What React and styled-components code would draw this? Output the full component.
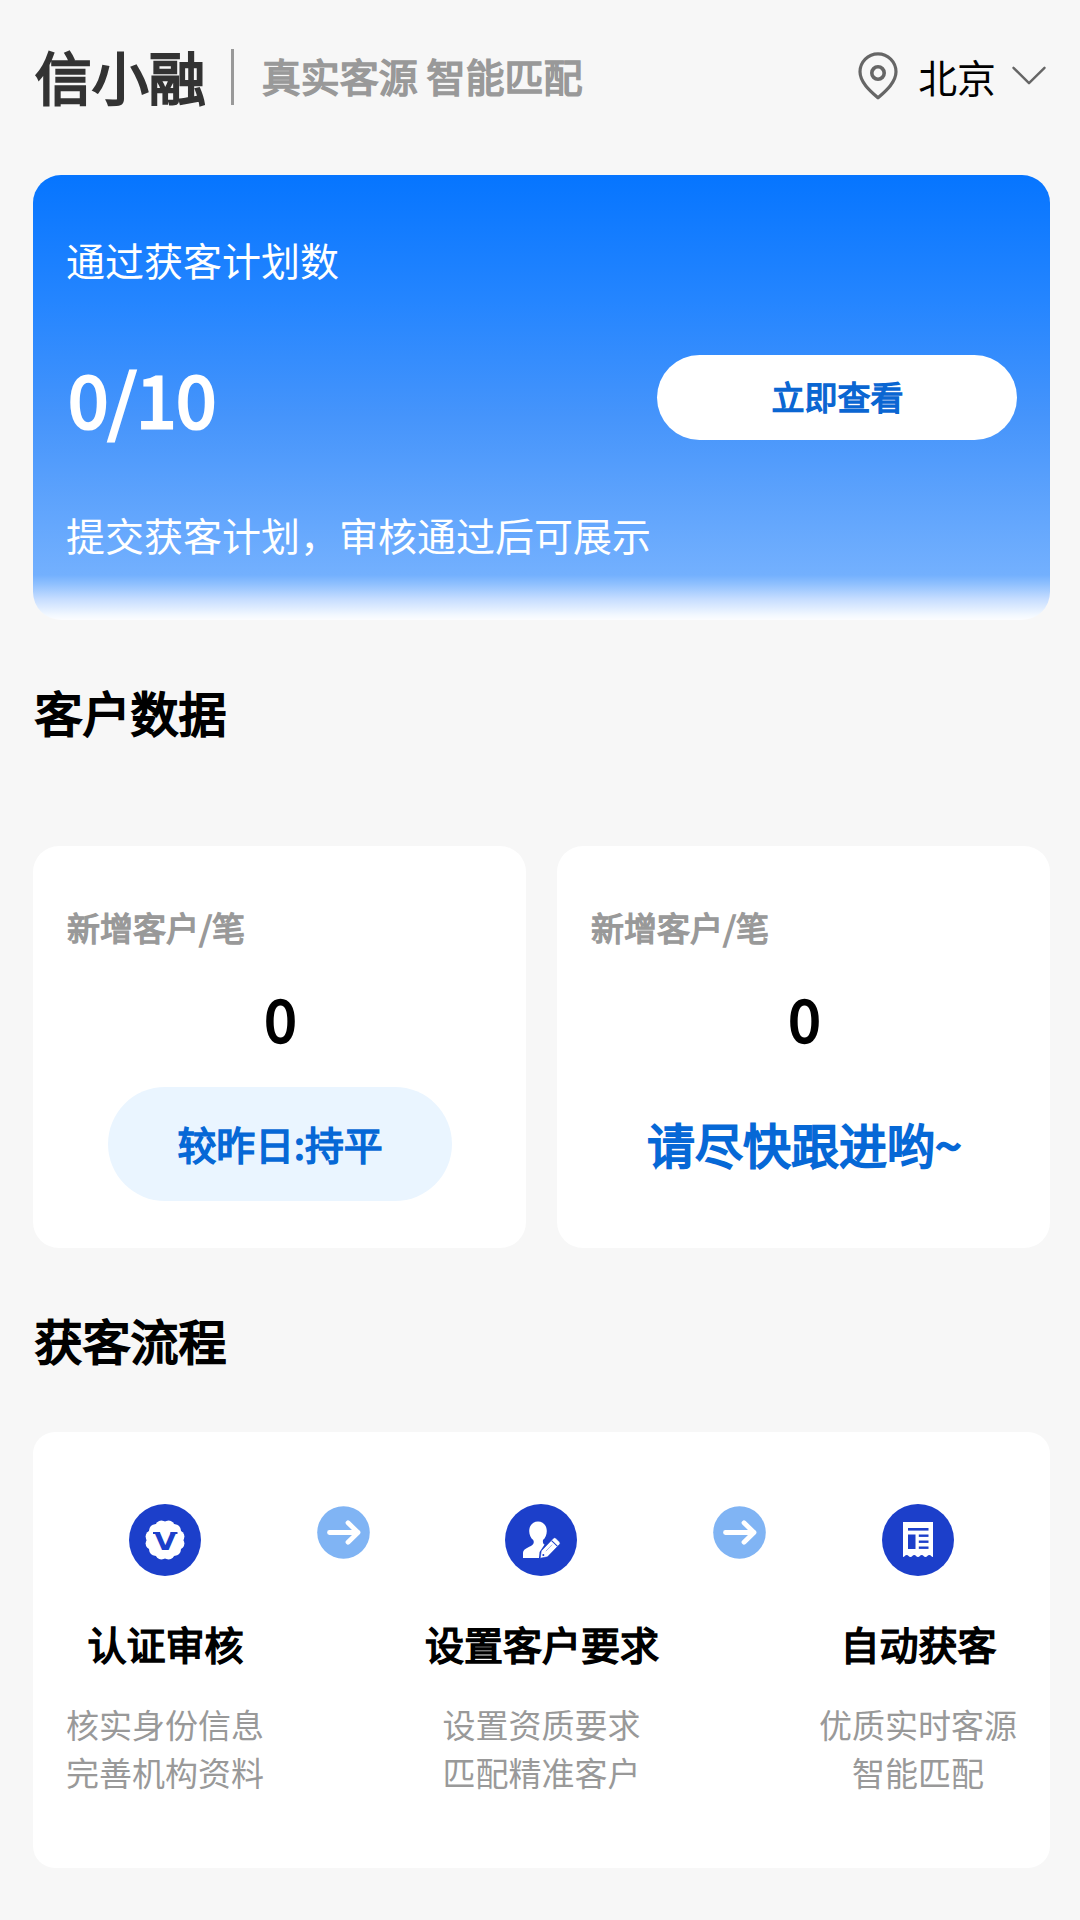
import React from 'react';
import styled, { createGlobalStyle, css } from 'styled-components';

const GlobalStyle = createGlobalStyle`
  * {
    box-sizing: border-box;
  }

  body {
    margin: 0;
    background: #f7f7f7;
    color: #000;
    font-family: 'Noto Sans CJK SC', sans-serif;
  }
`;

// regular cut thickened by an outline, like the system bold on phones
const emboldened = css`
  font-weight: 400;
  -webkit-text-stroke: 0.042em currentColor;
  text-indent: 0.03em;
`;

const Page = styled.div`
  display: flex;
  flex-direction: column;
  width: 1080px;
  height: 1920px;
  padding: 0 30px 0 33px;
  background: #f7f7f7;
`;

const Header = styled.header`
  display: flex;
  align-items: center;
  height: 175px;
  padding-bottom: 22px;
`;

const Brand = styled.h1`
  ${emboldened}
  margin: 0 0 3px;
  font-size: 57px;
  line-height: 84px;
  color: #333;
`;

const Divider = styled.div`
  width: 3px;
  height: 56px;
  margin: 0 27px 0 25px;
  background: #999;
`;

const Slogan = styled.div`
  ${emboldened}
  margin-bottom: 4px;
  font-size: 39px;
  line-height: 56px;
  color: #999;
`;

const Location = styled.div`
  display: flex;
  align-items: center;
  margin-left: auto;
  padding: 0 4px 1px 0;
`;

const City = styled.span`
  margin: 0 16px 0 20px;
  font-size: 38.9px;
  line-height: 56px;
`;

const PlanCard = styled.section`
  display: flex;
  flex-direction: column;
  justify-content: space-between;
  height: 445px;
  padding: 56px 33px 58px;
  border-radius: 28px;
  background: linear-gradient(
    180deg,
    #0675ff 0,
    #2485ff 125px,
    #4594fb 240px,
    #73b0fe 400px,
    #8fc0fe 409px,
    #c6ddff 424px,
    #f2f8ff 440px,
    #fcfdff 445px
  );
  color: #fff;
`;

const PlanText = styled.div`
  font-size: 39px;
  line-height: 56px;
`;

const PlanRow = styled.div`
  display: flex;
  align-items: center;
  justify-content: space-between;
`;

const PlanCount = styled.div`
  ${emboldened}
  font-size: 72px;
  line-height: 104px;
`;

const ViewButton = styled.button`
  ${emboldened}
  width: 360px;
  height: 85px;
  margin-top: 2px;
  padding: 0 0 4px;
  border: 0;
  border-radius: 43px;
  background: #fff;
  color: #0a66d2;
  font-family: inherit;
  font-size: 33px;
  line-height: 48px;
`;

const SectionTitle = styled.h2`
  ${emboldened}
  margin: ${({ $margin }) => $margin};
  font-size: 48px;
  line-height: 70px;
`;

const StatGrid = styled.div`
  display: grid;
  grid-template-columns: 1fr 1fr;
  gap: 31px;
`;

const StatCard = styled.section`
  display: flex;
  flex-direction: column;
  align-items: center;
  height: 402px;
  padding: 57px 33px 0;
  border-radius: 26px;
  background: #fff;
`;

const StatLabel = styled.div`
  ${emboldened}
  align-self: flex-start;
  font-size: 33px;
  line-height: 48px;
  color: #999;
`;

const StatValue = styled.div`
  ${emboldened}
  margin: 25px 0 28px;
  font-size: 57.6px;
  line-height: 83px;
`;

const StatNote = styled.div`
  ${emboldened}
  display: flex;
  align-items: center;
  justify-content: center;
  width: 344px;
  height: 114px;
  padding-bottom: 3px;
  border-radius: 57px;
  background: ${({ $pill }) => ($pill ? '#eaf5ff' : 'transparent')};
  color: #0668d6;
  font-size: ${({ $pill }) => ($pill ? '38.9px' : '48px')};
  white-space: nowrap;
`;

const FlowCard = styled.section`
  display: flex;
  justify-content: space-between;
  height: 436px;
  padding: 72px 33px 0;
  border-radius: 22px;
  background: #fff;
`;

const Step = styled.div`
  display: flex;
  flex-direction: column;
  align-items: center;
`;

const StepTitle = styled.h3`
  ${emboldened}
  margin: 39px 0 29px;
  font-size: 39px;
  line-height: 56px;
`;

const StepText = styled.p`
  margin: 0;
  font-size: 33px;
  line-height: 48px;
  text-align: center;
  color: #999;
`;

const ArrowIcon = styled.svg`
  flex: none;
  margin-top: 2px;
`;

const PinIcon = () => (
  <svg width="40" height="48" viewBox="0 0 40 48" fill="none" stroke="#666" strokeWidth="3.2">
    <path
      d="M20 45.8C14 40.5 2 31 2 19.8a18 18 0 0 1 36 0C38 31 26 40.5 20 45.8Z"
      strokeLinejoin="round"
    />
    <circle cx="20" cy="21" r="6.2" strokeWidth="3.6" />
  </svg>
);

const ChevronIcon = () => (
  <svg width="34" height="20" viewBox="0 0 34 20" fill="none" stroke="#666" strokeWidth="2.4">
    <path d="M1.5 1.8 17 17.2 32.5 1.8" strokeLinecap="round" strokeLinejoin="round" />
  </svg>
);

const Arrow = () => (
  <ArrowIcon width="53" height="53" viewBox="0 0 53 53" fill="none">
    <circle cx="26.5" cy="26.5" r="26.3" fill="#80b4f4" />
    <path
      d="M12.5 26.5H41M31 16.8 41 26.5 31 36.2"
      stroke="#fff"
      strokeWidth="4.8"
      strokeLinecap="round"
      strokeLinejoin="round"
    />
  </ArrowIcon>
);

const petals = Array.from({ length: 12 }, (_, i) => {
  const angle = ((i + 0.5) * Math.PI) / 6;
  return { cx: 36 + 14 * Math.cos(angle), cy: 36 + 14 * Math.sin(angle) };
});

const VerifyIcon = () => (
  <svg width="72" height="72" viewBox="0 0 72 72">
    <circle cx="36" cy="36" r="36" fill="#1c3fca" />
    <g fill="#fff">
      <circle cx="36" cy="36" r="18.4" />
      {petals.map((p) => (
        <circle key={`${p.cx}-${p.cy}`} cx={p.cx} cy={p.cy} r="5.9" />
      ))}
    </g>
    <g fill="#1c3fca">
      <rect x="24" y="28" width="7" height="2" />
      <rect x="41.5" y="28" width="7" height="2" />
      <text
        x="25"
        y="45.5"
        fontFamily="DejaVu Sans"
        fontWeight="700"
        fontSize="24"
        textLength="22.5"
        lengthAdjust="spacingAndGlyphs"
      >
        V
      </text>
    </g>
  </svg>
);

const CustomerIcon = () => (
  <svg width="72" height="72" viewBox="0 0 72 72">
    <circle cx="36" cy="36" r="36" fill="#1c3fca" />
    <path
      d="M33 17.5c5.2 0 8.8 4 8.8 9.4 0 3.8-1.6 7.2-3.8 9.2-.4 2.3.2 3.8 1.6 4.4l-5 7.5-.6 6H18v-5.2c0-4.8 8.6-5.8 10.2-8.8.8-1.4.7-2.6 0-3.9-2.3-2-4-5.4-4-9.2 0-5.4 3.6-9.4 8.8-9.4Z"
      fill="#fff"
    />
    <g transform="translate(35.2 54.2) rotate(-46)">
      <path
        d="M0 0 6-4.3H23.5a1.7 1.7 0 0 1 1.7 1.7V2.6a1.7 1.7 0 0 1-1.7 1.7H6Z"
        fill="#fff"
        stroke="#1c3fca"
        strokeWidth="0.5"
      />
      <path d="M20.5-4V4" stroke="#1c3fca" strokeWidth="1" />
      <path d="M9-.8H18" stroke="#1c3fca" strokeWidth="0.4" />
      <circle cx="4.5" cy="0" r="1" fill="#1c3fca" />
    </g>
  </svg>
);

const ReceiptIcon = () => (
  <svg width="72" height="72" viewBox="0 0 72 72">
    <circle cx="36" cy="36" r="36" fill="#1c3fca" />
    <path
      d="M21 18H51V53c-1.5 0-2-2-3.7-2s-2.2 2-3.8 2-2.2-2-3.8-2-2.1 2-3.7 2-2.2-2-3.8-2-2.1 2-3.7 2-2.2-2-3.8-2-2.2 2-3.7 2Z"
      fill="#fff"
    />
    <g fill="#1c3fca">
      <rect x="26" y="24" width="20.5" height="2.6" />
      <rect x="26" y="30.5" width="7.5" height="14.5" />
      <rect x="36.8" y="30.5" width="9.7" height="2.4" />
      <rect x="36.8" y="36.5" width="9.7" height="2.4" />
      <rect x="36.8" y="42.5" width="9.7" height="2.4" />
    </g>
  </svg>
);

const steps = [
  { title: '认证审核', lines: ['核实身份信息', '完善机构资料'], Icon: VerifyIcon },
  { title: '设置客户要求', lines: ['设置资质要求', '匹配精准客户'], Icon: CustomerIcon },
  { title: '自动获客', lines: ['优质实时客源', '智能匹配'], Icon: ReceiptIcon },
];

const App = () => (
  <React.Fragment>
    <GlobalStyle />
    <Page>
      <Header>
        <Brand>信小融</Brand>
        <Divider />
        <Slogan>真实客源 智能匹配</Slogan>
        <Location>
          <PinIcon />
          <City>北京</City>
          <ChevronIcon />
        </Location>
      </Header>

      <PlanCard>
        <PlanText>通过获客计划数</PlanText>
        <PlanRow>
          <PlanCount>0/10</PlanCount>
          <ViewButton>立即查看</ViewButton>
        </PlanRow>
        <PlanText>提交获客计划，审核通过后可展示</PlanText>
      </PlanCard>

      <SectionTitle $margin="56px 0 100px">客户数据</SectionTitle>
      <StatGrid>
        <StatCard>
          <StatLabel>新增客户/笔</StatLabel>
          <StatValue>0</StatValue>
          <StatNote $pill>较昨日:持平</StatNote>
        </StatCard>
        <StatCard>
          <StatLabel>新增客户/笔</StatLabel>
          <StatValue>0</StatValue>
          <StatNote>请尽快跟进哟~</StatNote>
        </StatCard>
      </StatGrid>

      <SectionTitle $margin="56px 0 58px">获客流程</SectionTitle>
      <FlowCard>
        {steps.map(({ title, lines, Icon }, i) => (
          <React.Fragment key={title}>
            {i > 0 && <Arrow />}
            <Step>
              <Icon />
              <StepTitle>{title}</StepTitle>
              {lines.map((line) => (
                <StepText key={line}>{line}</StepText>
              ))}
            </Step>
          </React.Fragment>
        ))}
      </FlowCard>
    </Page>
  </React.Fragment>
);

export default App;
